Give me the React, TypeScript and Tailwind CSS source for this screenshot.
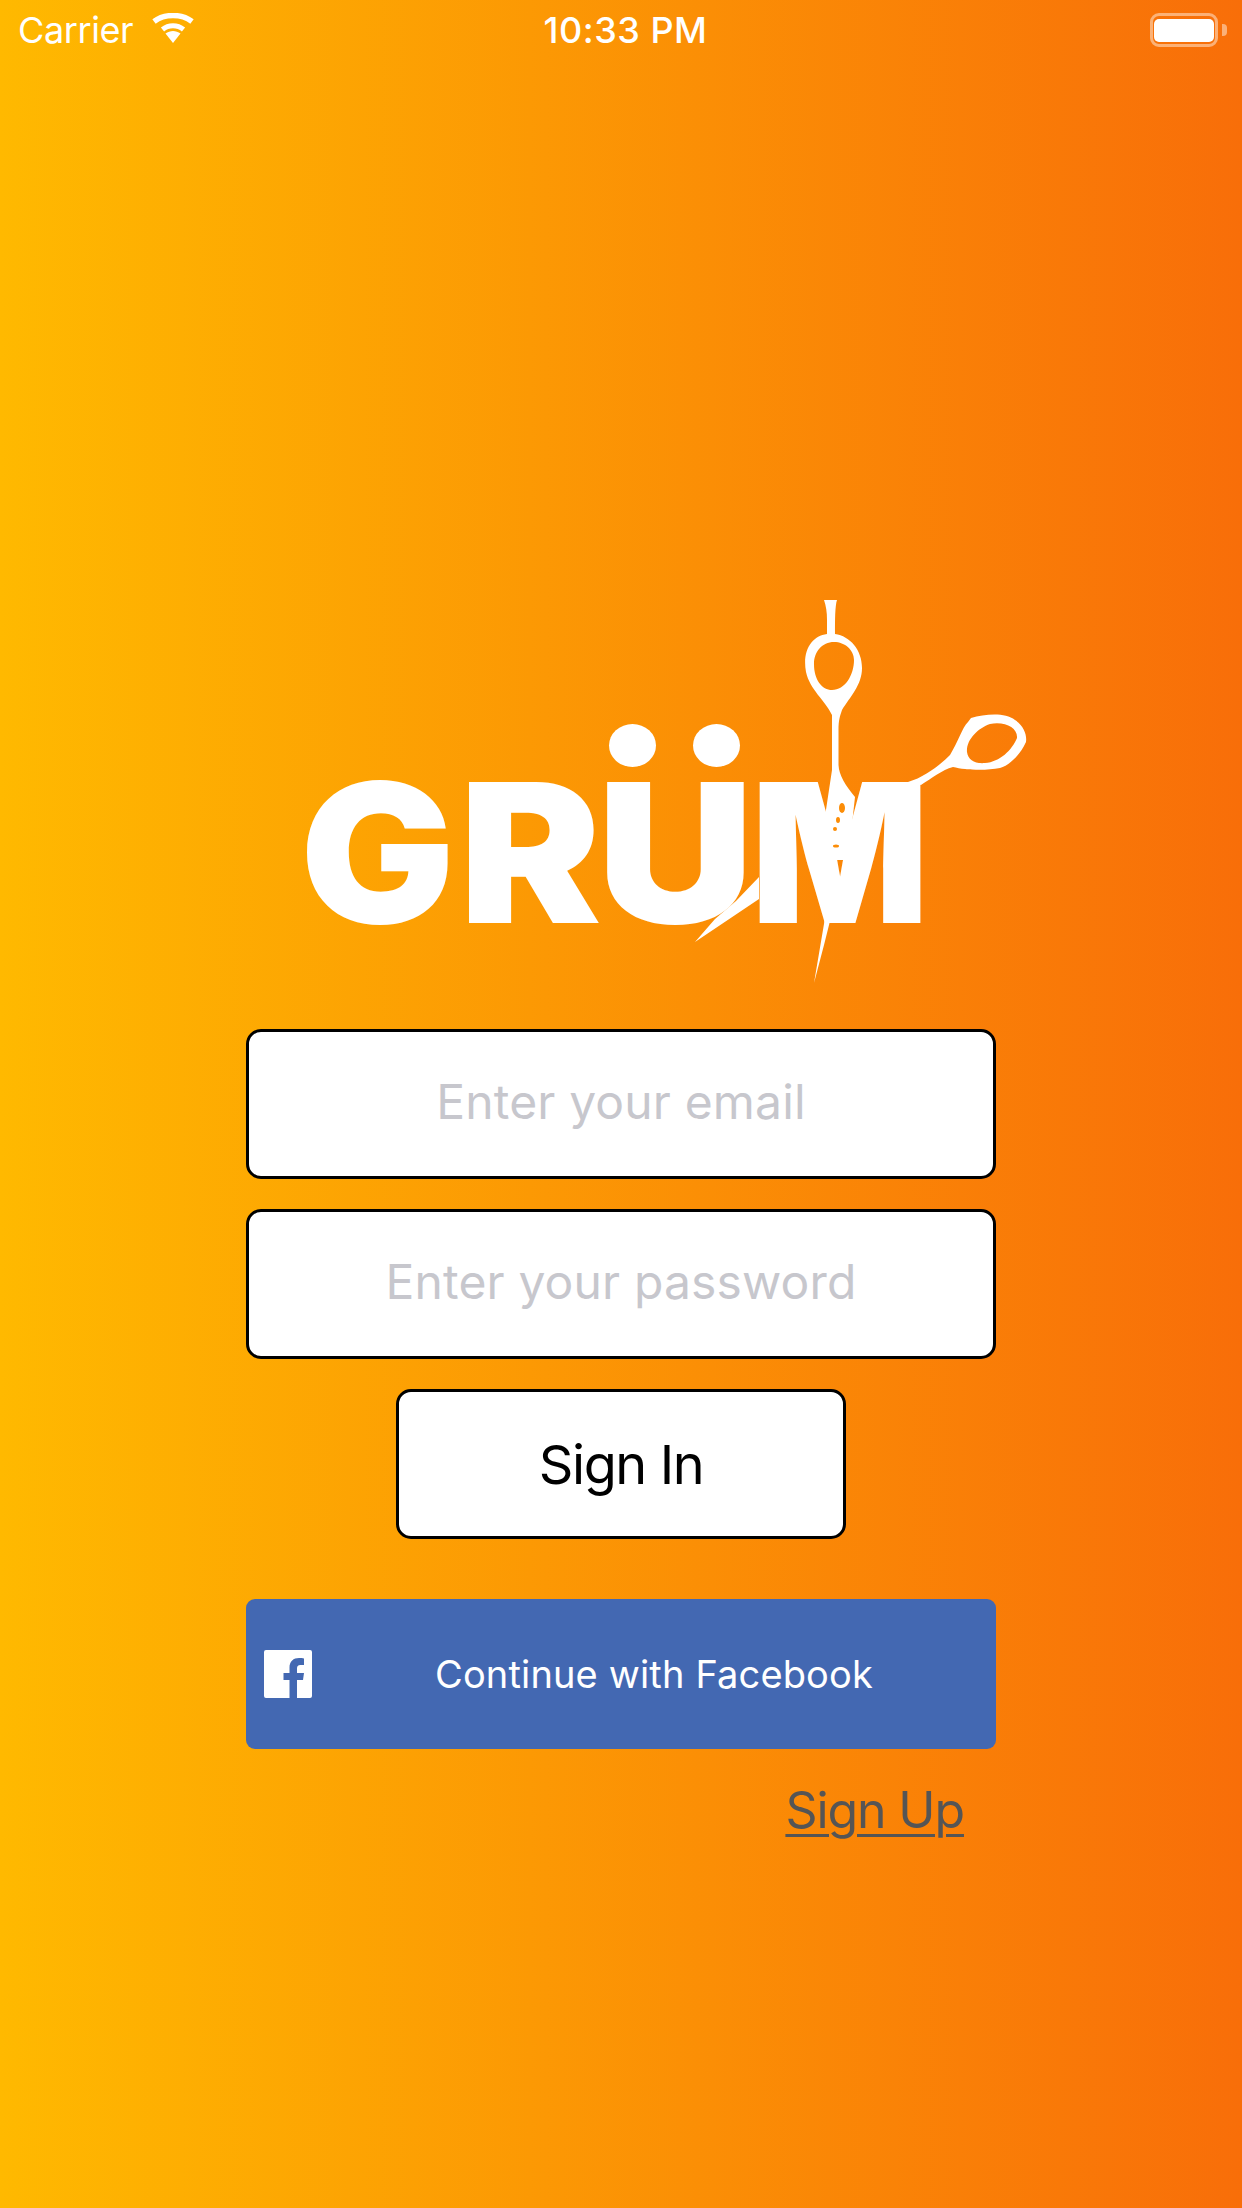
function Wifi() {
  return (
    <svg width="44" height="30" viewBox="0 0 44 30" className="ml-[18px] mt-[-4px]">
      <path d="M22 30 L14.500 20.500 C19 17 25 17 29.500 20.500 Z" fill="white" />
      <path d="M11.500 16.500 C17.500 11.500 26.500 11.500 32.500 16.500" fill="none" stroke="white" strokeWidth="5" />
      <path d="M3 8.500 C13.500 0.500 30.500 0.500 41 8.500" fill="none" stroke="white" strokeWidth="5.500" />
    </svg>
  );
}

function Battery() {
  return (
    <div className="flex items-center">
      <div className="flex h-[34px] w-[68px] items-center justify-center rounded-[9px] border-[3px] border-white/45">
        <div className="h-[23px] w-[60px] rounded-[5px] bg-white" />
      </div>
      <div className="ml-[4px] h-[12px] w-[5px] rounded-r-[4px] bg-white/45" />
    </div>
  );
}

function StatusBar() {
  return (
    <div className="flex h-[60px] items-center justify-between pl-[18px] pr-[15px] text-[36px] text-white">
      <div className="flex w-[300px] items-center">
        <span className="tracking-[-0.4px]">Carrier</span>
        <Wifi />
      </div>
      <span className="ml-[6px] font-medium tracking-[0.5px]">10:33 PM</span>
      <div className="flex w-[300px] justify-end">
        <Battery />
      </div>
    </div>
  );
}

// scissors and umlaut dots, coordinates are page pixels
function LogoArt() {
  return (
    <svg viewBox="246 600 750 429" className="absolute inset-0 h-[429px] w-[750px] overflow-visible" fill="white">
      <ellipse cx="632.500" cy="745.500" rx="23.500" ry="21.500" />
      <ellipse cx="716.500" cy="745.500" rx="23.500" ry="21.500" />
      <path
        fillRule="evenodd"
        d="M824 600 L837 600 C835 606 835 620 835 634 C850 636 862 650 862 668 C862 685 850 697 842 710 C840 716 838.500 720 838.500 730 L838.500 765 C839 775 845 785 855 797 L848 860 L815 860 L824 823 L832 770 L832 715 C825 700 810 690 806 672 C802 650 812 636 827 634 L827 620 C827 612 826 606 824 600 Z M834 642 C822 642 814 652 814 664 C814 680 822 690 832 690 C845 690 854 675 854 660 C854 650 845 642 834 642 Z"
      />
      <path
        fillRule="evenodd"
        d="M908 782 C925 777 940 765 950 755 C958 742 962 728 968 722 L971 718 C985 714 1005 712 1015 720 C1024 726 1027 735 1026 742 C1020 755 1010 765 1000 768 C985 771 965 770 953 767 C942 770 932 778 921 785 Z M990 724 C978 728 966 740 967 752 C968 760 975 764 985 763 C1000 762 1012 750 1017 738 C1018 728 1005 721 990 724 Z"
      />
      <path d="M824 900 L822 905 L826 908 L825 918 L814 983 L824 945 L831 917 L840 905 Z" />
      <path d="M759 877 L736 901 L715 919 L695 942 L759 899 Z" />
      <g fill="#fc8d07">
        <ellipse cx="842" cy="808" rx="3" ry="5" />
        <ellipse cx="838" cy="820" rx="2" ry="3" />
        <ellipse cx="835" cy="829" rx="2" ry="2" />
        <ellipse cx="836" cy="846" rx="3" ry="1.500" />
      </g>
    </svg>
  );
}

function Logo() {
  return (
    <div className="relative mt-[540px] h-[429px] w-[750px]">
      <div className="absolute inset-x-0 bottom-[106px] flex h-[141px] pl-[54px] text-[194px] font-black leading-[141px] text-white">
        <span className="w-[159px] origin-left scale-x-[1.06]">G</span>
        <span className="w-[138px] origin-left scale-x-[1.1]">R</span>
        <span className="w-[154px] origin-left scale-x-[1.12] [clip-path:inset(0_-40px_-40px_-40px)]">Ü</span>
        <span className="origin-left scale-x-[0.96]">M</span>
      </div>
      <LogoArt />
    </div>
  );
}

function FacebookIcon() {
  return (
    <svg width="48" height="48" viewBox="0 0 48 48" className="shrink-0">
      <path
        fill="white"
        d="M2 0 H46 A2 2 0 0 1 48 2 V46 A2 2 0 0 1 46 48 H33 V30 H39 L40 23 H33 V18.500 C33 16.500 33.800 15 36.500 15 H40 V8.500 C38.800 8.300 37 8 35 8 C29.500 8 25.500 11.300 25.500 17.500 V23 H19.500 V30 H25.500 V48 H2 A2 2 0 0 1 0 46 V2 A2 2 0 0 1 2 0 Z"
      />
    </svg>
  );
}

const fieldClass =
  "h-[150px] w-[750px] rounded-[15px] border-[3px] border-black bg-white pb-[5px] text-center text-[48px] tracking-[0.15px] text-black outline-none placeholder:text-[#c7c7cd]";

export default function App() {
  return (
    <div className="h-[2208px] w-full bg-linear-to-r/srgb from-[#ffb900] to-[#f86e09] [font-family:Inter,sans-serif]">
      <StatusBar />
      <div className="flex flex-col items-center">
        <Logo />
        <input className={fieldClass} placeholder="Enter your email" />
        <input className={`${fieldClass} mt-[30px]`} placeholder="Enter your password" type="password" />
        <button className="mt-[30px] h-[150px] w-[450px] rounded-[15px] border-[3px] border-black bg-white text-[54px] tracking-[-1.400px] text-black">
          Sign In
        </button>
        <button className="mt-[60px] flex h-[150px] w-[750px] items-center rounded-[9px] bg-[#4368b2] pl-[18px] text-white">
          <FacebookIcon />
          <span className="flex-1 text-center text-[38px] tracking-[0.15px]">Continue with Facebook</span>
        </button>
        <div className="mt-[31px] flex w-[750px] justify-end pr-[32px]">
          <a className="text-[50px] leading-[60px] tracking-[-1.100px] text-[#555555] underline decoration-[3px] underline-offset-[6px]">
            Sign Up
          </a>
        </div>
      </div>
    </div>
  );
}
